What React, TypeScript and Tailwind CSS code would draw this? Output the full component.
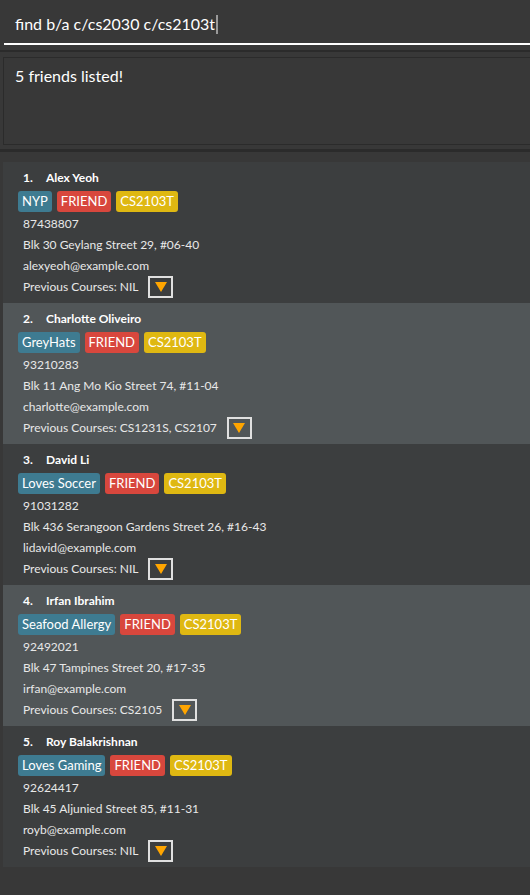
const persons = [
  {
    name: 'Alex Yeoh',
    tags: [
      { label: 'NYP', kind: 'blue' },
      { label: 'FRIEND', kind: 'red' },
      { label: 'CS2103T', kind: 'yellow' },
    ],
    phone: '87438807',
    address: 'Blk 30 Geylang Street 29, #06-40',
    email: 'alexyeoh@example.com',
    courses: 'NIL',
  },
  {
    name: 'Charlotte Oliveiro',
    tags: [
      { label: 'GreyHats', kind: 'blue' },
      { label: 'FRIEND', kind: 'red' },
      { label: 'CS2103T', kind: 'yellow' },
    ],
    phone: '93210283',
    address: 'Blk 11 Ang Mo Kio Street 74, #11-04',
    email: 'charlotte@example.com',
    courses: 'CS1231S, CS2107',
  },
  {
    name: 'David Li',
    tags: [
      { label: 'Loves Soccer', kind: 'blue' },
      { label: 'FRIEND', kind: 'red' },
      { label: 'CS2103T', kind: 'yellow' },
    ],
    phone: '91031282',
    address: 'Blk 436 Serangoon Gardens Street 26, #16-43',
    email: 'lidavid@example.com',
    courses: 'NIL',
  },
  {
    name: 'Irfan Ibrahim',
    tags: [
      { label: 'Seafood Allergy', kind: 'blue' },
      { label: 'FRIEND', kind: 'red' },
      { label: 'CS2103T', kind: 'yellow' },
    ],
    phone: '92492021',
    address: 'Blk 47 Tampines Street 20, #17-35',
    email: 'irfan@example.com',
    courses: 'CS2105',
  },
  {
    name: 'Roy Balakrishnan',
    tags: [
      { label: 'Loves Gaming', kind: 'blue' },
      { label: 'FRIEND', kind: 'red' },
      { label: 'CS2103T', kind: 'yellow' },
    ],
    phone: '92624417',
    address: 'Blk 45 Aljunied Street 85, #11-31',
    email: 'royb@example.com',
    courses: 'NIL',
  },
];

const tagColors: Record<string, string> = {
  blue: 'bg-[#3e7b91]',
  red: 'bg-[#d8473d]',
  yellow: 'bg-[#dfb812]',
};

function DropdownButton() {
  return (
    <div className="ml-[10px] flex h-[22px] w-[25px] items-center justify-center border-2 border-[#e0e0e0]">
      <svg width="12" height="10" viewBox="0 0 12 10">
        <polygon points="0,0 12,0 6,10" fill="#ffa500" />
      </svg>
    </div>
  );
}

function PersonCard({ index, person }: { index: number; person: (typeof persons)[number] }) {
  const odd = index % 2 === 1;
  return (
    <div className={`flex h-[141px] flex-col pl-[20px] pt-[8px] ${odd ? 'bg-[#515658]' : 'bg-[#3c3e3f]'}`}>
      <div className="flex h-[16px] items-center text-[12px] font-bold text-white">
        <span className="w-[23px]">{index + 1}.</span>
        <span>{person.name}</span>
      </div>
      <div className="-ml-[5px] mt-[5px] flex gap-[5px]">
        {person.tags.map((t) => (
          <span
            key={t.label}
            className={`flex h-[21px] items-center rounded-[3px] px-[4px] text-[13px] text-white ${tagColors[t.kind]}`}
          >
            {t.label}
          </span>
        ))}
      </div>
      <div className="mt-[1px] flex h-[21px] items-center text-[12px] text-[#e8e8e8]">{person.phone}</div>
      <div className="flex h-[21px] items-center text-[12px] text-[#e8e8e8]">{person.address}</div>
      <div className="flex h-[21px] items-center text-[12px] text-[#e8e8e8]">{person.email}</div>
      <div className="flex h-[22px] items-center text-[12px] text-[#e8e8e8]">
        <span>Previous Courses: {person.courses}</span>
        <DropdownButton />
      </div>
    </div>
  );
}

export default function App() {
  return (
    <div className="h-[895px] w-[530px] overflow-hidden bg-[#383838]" style={{ fontFamily: '"Lato", "Noto Sans", sans-serif' }}>
      <div className="flex h-[43px] items-center pl-[15px] pt-[5px] text-[16px] text-white">
        <span>find b/a c/cs2030 c/cs2103t</span>
        <span className="ml-[1px] inline-block h-[19px] w-[2px] bg-[#9a9a9a]" />
      </div>
      <div className="ml-[4px] h-[2px] bg-white" />
      <div className="mt-[5px] h-[2px] bg-[#2b2b2b]" />
      <div className="ml-[3px] mt-[5px] h-[88px] border border-r-0 border-[#2b2b2b] pl-[11px] pt-[6px] text-[16px] text-white">
        5 friends listed!
      </div>
      <div className="mt-[4px] h-[3px] bg-[#2b2b2b]" />
      <div className="ml-[3px] mt-[10px] flex flex-col">
        {persons.map((p, i) => (
          <PersonCard key={p.name} index={i} person={p} />
        ))}
      </div>
    </div>
  );
}
